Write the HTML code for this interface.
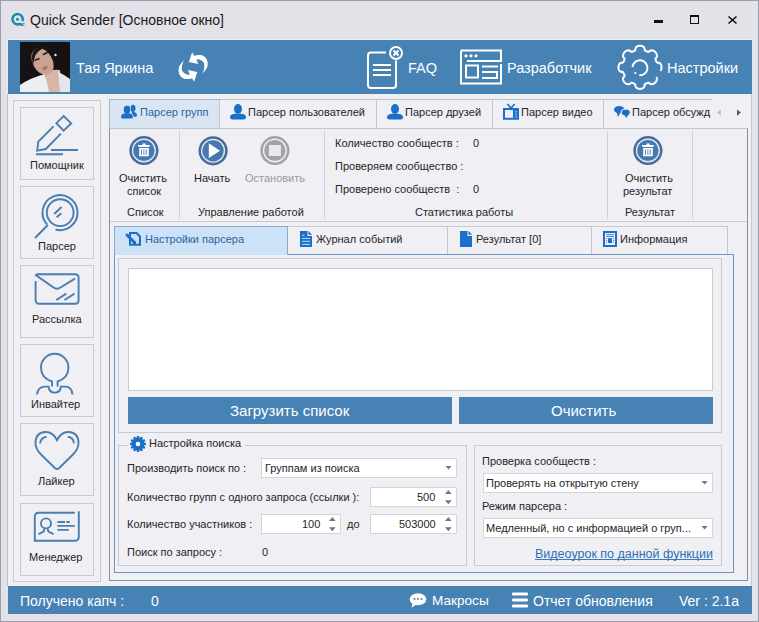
<!DOCTYPE html>
<html><head><meta charset="utf-8">
<style>
*{box-sizing:border-box;margin:0;padding:0}
html,body{width:759px;height:622px;overflow:hidden;background:#e3e2e8}
body{position:relative;font-family:"Liberation Sans",sans-serif;color:#262626}
.a{position:absolute}
.t{position:absolute;white-space:nowrap;line-height:1;font-size:11px}
.w{color:#fff}
.bx{position:absolute;border:1px solid #c9c9d1}
svg{position:absolute;overflow:visible}
</style></head><body>
<!-- window border -->
<div class="a" style="left:0;top:0;width:759px;height:622px;border:1px solid #9d9db1"></div>

<!-- title bar -->
<svg style="left:0;top:0" width="40" height="40" viewBox="0 0 40 40">
  <path d="M22.37 21.13 A5.15 5.15 0 1 0 19.19 24.10" fill="none" stroke="#1a8ba5" stroke-width="2.5"/>
  <path d="M18.8 23.6 L22.6 25.2" stroke="#1a8ba5" stroke-width="2.4"/>
  <path d="M22.5 23.4 H24.5 M22.5 25.3 H24.5" stroke="#2a7f95" stroke-width="0.9"/>
  <circle cx="17.5" cy="19.2" r="1.5" fill="#1a8ba5"/>
</svg>
<div class="t" style="left:30px;top:13px;font-size:14px;color:#1a1a1a">Quick Sender [Основное окно]</div>
<div class="a" style="left:654px;top:20px;width:9px;height:3px;background:#111"></div>
<div class="a" style="left:690px;top:15px;width:9px;height:9px;border:1px solid #111;border-top-width:2px"></div>
<svg style="left:728px;top:16px" width="9" height="8" viewBox="0 0 9 8"><path d="M0.5 0.5 L8.5 7.5 M8.5 0.5 L0.5 7.5" stroke="#111" stroke-width="1.6"/></svg>

<!-- header -->
<div class="a" style="left:7px;top:39px;width:745px;height:56px;background:#eaedf3"></div>
<div class="a" style="left:8px;top:40px;width:744px;height:54px;background:#4682b4"></div>
<div id="photo" class="a" style="left:20px;top:42px;width:50px;height:50px;background:#2a1e1e;overflow:hidden"></div>
<div class="t w" style="left:76px;top:61px;font-size:14.5px">Тая Яркина</div>
<div class="t w" style="left:408px;top:61px;font-size:14.5px">FAQ</div>
<div class="t w" style="left:507px;top:61px;font-size:14.5px">Разработчик</div>
<div class="t w" style="left:667px;top:61px;font-size:14.5px">Настройки</div>

<!-- main frame -->
<div class="a" style="left:7px;top:94px;width:745px;height:492px;background:#efeff4;border-left:1px solid #bdbdc6;border-right:1px solid #c8c8cf"></div>
<div class="a" style="left:8px;top:94px;width:743px;height:1px;background:#e8f0f8"></div>

<!-- sidebar -->
<div class="bx" style="left:13px;top:100px;width:88px;height:482px"></div>
<div class="bx" style="left:20px;top:107px;width:74px;height:73px"></div>
<div class="bx" style="left:20px;top:186px;width:74px;height:73px"></div>
<div class="bx" style="left:20px;top:265px;width:74px;height:73px"></div>
<div class="bx" style="left:20px;top:344px;width:74px;height:73px"></div>
<div class="bx" style="left:20px;top:423px;width:74px;height:73px"></div>
<div class="bx" style="left:20px;top:503px;width:74px;height:73px"></div>
<div class="t" style="left:30px;top:160px">Помощник</div>
<div class="t" style="left:38px;top:241px">Парсер</div>
<div class="t" style="left:32px;top:314px">Рассылка</div>
<div class="t" style="left:31px;top:399px">Инвайтер</div>
<div class="t" style="left:38px;top:476px">Лайкер</div>
<div class="t" style="left:29px;top:552px">Менеджер</div>

<!-- tab control 1 -->
<div class="a" style="left:109px;top:99px;width:603px;height:30px;border-top:1px solid #b9bfcc"></div>
<div class="a" style="left:109px;top:99px;width:111px;height:29px;background:#d9e5f2;border:1px solid #a7b4c6;border-bottom:none"></div>
<div class="a" style="left:219px;top:100px;width:1px;height:28px;background:#c3c7d0"></div>
<div class="a" style="left:376px;top:100px;width:1px;height:28px;background:#c3c7d0"></div>
<div class="a" style="left:492px;top:100px;width:1px;height:28px;background:#c3c7d0"></div>
<div class="a" style="left:603px;top:100px;width:1px;height:28px;background:#c3c7d0"></div>
<div class="t" style="left:140px;top:107px;color:#2667a3">Парсер групп</div>
<div class="t" style="left:248px;top:107px">Парсер пользователей</div>
<div class="t" style="left:405px;top:107px">Парсер друзей</div>
<div class="t" style="left:521px;top:107px">Парсер видео</div>
<div class="t" style="left:632px;top:107px">Парсер обсужд</div>

<!-- page 1 -->
<div class="a" style="left:109px;top:128px;width:639px;height:453px;border:1px solid #7d93b0;border-top-color:#c0c6d0"></div>
<div class="a" style="left:110px;top:221px;width:637px;height:1px;background:#c9c9d1"></div>
<div class="a" style="left:179px;top:131px;width:1px;height:88px;background:#d0d0d8"></div>
<div class="a" style="left:324px;top:131px;width:1px;height:88px;background:#d0d0d8"></div>
<div class="a" style="left:607px;top:131px;width:1px;height:88px;background:#d0d0d8"></div>
<div class="a" style="left:692px;top:131px;width:1px;height:88px;background:#d0d0d8"></div>

<div class="t" style="left:119px;top:173px">Очистить</div>
<div class="t" style="left:127px;top:186px">список</div>
<div class="t" style="left:127px;top:207px">Список</div>
<div class="t" style="left:194px;top:173px">Начать</div>
<div class="t" style="left:245px;top:173px;color:#9a9a9a">Остановить</div>
<div class="t" style="left:198px;top:207px">Управление работой</div>
<div class="t" style="left:335px;top:138px">Количество сообществ :</div>
<div class="t" style="left:473px;top:138px">0</div>
<div class="t" style="left:335px;top:161px">Проверяем сообщество :</div>
<div class="t" style="left:335px;top:184px">Проверено сообществ&nbsp; :</div>
<div class="t" style="left:473px;top:184px">0</div>
<div class="t" style="left:415px;top:207px">Статистика работы</div>
<div class="t" style="left:625px;top:173px">Очистить</div>
<div class="t" style="left:623px;top:186px">результат</div>
<div class="t" style="left:625px;top:207px">Результат</div>

<!-- tab control 2 -->
<div class="a" style="left:114px;top:226px;width:614px;height:29px;border-top:1px solid #c4c8d0"></div>
<div class="a" style="left:114px;top:226px;width:174px;height:29px;background:#cde1f7;border:1px solid #85a9d2;border-bottom:none"></div>
<div class="a" style="left:447px;top:227px;width:1px;height:27px;background:#c3c7d0"></div>
<div class="a" style="left:591px;top:227px;width:1px;height:27px;background:#c3c7d0"></div>
<div class="a" style="left:727px;top:227px;width:1px;height:27px;background:#c3c7d0"></div>
<div class="t" style="left:145px;top:234px;color:#2667a3">Настройки парсера</div>
<div class="t" style="left:316px;top:234px">Журнал событий</div>
<div class="t" style="left:476px;top:234px">Результат [0]</div>
<div class="t" style="left:620px;top:234px">Информация</div>

<div class="a" style="left:114px;top:254px;width:620px;height:319px;border:1px solid #6f94c0;border-top:none"></div>
<div class="a" style="left:288px;top:254px;width:446px;height:1px;background:#6f94c0"></div>
<div class="bx" style="left:118px;top:258px;width:604px;height:175px"></div>
<div class="a" style="left:128px;top:268px;width:585px;height:123px;background:#fff;border:1px solid #c9c9d1"></div>
<div class="a" style="left:128px;top:397px;width:324px;height:27px;background:#4682b4"></div>
<div class="a" style="left:459px;top:397px;width:254px;height:27px;background:#4682b4"></div>
<div class="t w" style="left:230px;top:403px;font-size:15px">Загрузить список</div>
<div class="t w" style="left:551px;top:403px;font-size:15px">Очистить</div>

<!-- group left -->
<div class="bx" style="left:118px;top:445px;width:349px;height:121px"></div>
<div class="a" style="left:128px;top:440px;width:117px;height:10px;background:#efeff4"></div>
<div class="t" style="left:149px;top:438px">Настройка поиска</div>
<div class="t" style="left:127px;top:463px">Производить поиск по :</div>
<div class="t" style="left:127px;top:492px">Количество групп с одного запроса (ссылки ):</div>
<div class="t" style="left:127px;top:519px">Количество участников :</div>
<div class="t" style="left:347px;top:519px">до</div>
<div class="t" style="left:127px;top:547px">Поиск по запросу :</div>
<div class="t" style="left:262px;top:547px">0</div>
<div class="a" style="left:261px;top:458px;width:196px;height:20px;background:#fff;border:1px solid #d4d4dc"></div>
<div class="t" style="left:265px;top:463px">Группам из поиска</div>
<div class="a" style="left:370px;top:487px;width:87px;height:20px;background:#fff;border:1px solid #d4d4dc"></div>
<div class="t" style="left:417px;top:492px">500</div>
<div class="a" style="left:261px;top:514px;width:80px;height:20px;background:#fff;border:1px solid #d4d4dc"></div>
<div class="t" style="left:302px;top:519px">100</div>
<div class="a" style="left:370px;top:514px;width:87px;height:20px;background:#fff;border:1px solid #d4d4dc"></div>
<div class="t" style="left:399px;top:519px">503000</div>

<!-- group right -->
<div class="bx" style="left:474px;top:445px;width:248px;height:121px"></div>
<div class="t" style="left:482px;top:456px">Проверка сообществ :</div>
<div class="a" style="left:483px;top:473px;width:230px;height:20px;background:#fff;border:1px solid #d4d4dc"></div>
<div class="t" style="left:486px;top:478px">Проверять на открытую стену</div>
<div class="t" style="left:482px;top:501px">Режим парсера :</div>
<div class="a" style="left:483px;top:518px;width:230px;height:20px;background:#fff;border:1px solid #d4d4dc"></div>
<div class="t" style="left:486px;top:523px">Медленный, но с информацией о груп...</div>
<div class="t" style="left:535px;top:548px;font-size:12.5px;color:#3270ad;text-decoration:underline;text-decoration-color:#2a80d0;text-decoration-skip-ink:none">Видеоурок по данной функции</div>

<!-- status bar -->
<div class="a" style="left:8px;top:586px;width:744px;height:28px;background:#4682b4"></div>
<div class="t w" style="left:20px;top:594px;font-size:14px">Получено капч :</div>
<div class="t w" style="left:151px;top:594px;font-size:14px">0</div>
<div class="t w" style="left:432px;top:594px;font-size:13.6px">Макросы</div>
<div class="t w" style="left:533px;top:594px;font-size:14px">Отчет обновления</div>
<div class="t w" style="left:679px;top:594px;font-size:14px">Ver : 2.1a</div>

<!-- ICONS overlay -->
<svg class="a" style="left:0;top:0" width="759" height="622" viewBox="0 0 759 622">
 <!-- photo -->
 <defs><clipPath id="pc"><rect x="20" y="42" width="50" height="50"/></clipPath></defs>
 <rect x="20" y="42" width="50" height="50" fill="#161112"/>
 <g clip-path="url(#pc)"><g>
  <rect x="20" y="42" width="50" height="50" fill="#161112"/>
  <path d="M46 72 Q53 69 60 70 L63 92 L44 92 Z" fill="#d6b6a6"/>
  <ellipse cx="42.5" cy="61.5" rx="9.8" ry="14.5" transform="rotate(-30 42.5 61.5)" fill="#c9a390"/>
  <path d="M33 51 Q38 46 45 47 Q39 50 35.5 55 Q33.5 60 33 66 Q31 58 33 51 Z" fill="#1e1616"/>
  <path d="M20 92 V85 Q30 78 45 74 L49 92 Z" fill="#eeedf0"/>
  <path d="M58 72 Q65 75 70 79 V92 H60 Z" fill="#e6e4e8"/>
  <path d="M34.5 60.5 L39.5 58.5 M43 54.8 L47.8 52.3" stroke="#2e1e1c" stroke-width="1.6"/>
  <ellipse cx="45" cy="68" rx="3" ry="1.7" transform="rotate(-30 45 68)" fill="#b87068"/>
  <circle cx="55.5" cy="55" r="1.2" fill="#ece6e2"/>
 </g></g>
 <!-- refresh -->
 <g fill="#fff">
  <path id="arr" d="M192.1 52.2 L188.9 62 L198.3 63.9 L196.3 59.4 Q201.3 59 203.9 63 Q205.6 67.5 202.2 73.6 Q208.3 68.5 207.7 63 Q207 56.5 201.2 55.1 Q197.6 54.5 194.2 55.8 Z"/>
  <use href="#arr" transform="rotate(180 193.1 67)"/>
 </g>
 <!-- FAQ icon -->
 <g fill="none" stroke="#fff" stroke-width="2">
  <path d="M386 52.5 H371 Q368 52.5 368 55.5 V85 Q368 88 371 88 H393 Q396 88 396 85 V60.5"/>
  <circle cx="396" cy="53" r="6"/>
  <path d="M373 65 H391 M373 70 H391 M373 75 H391"/>
 </g>
 <path d="M393.5 50.5 L398.5 55.5 M398.5 50.5 L393.5 55.5" stroke="#fff" stroke-width="1.8"/>
 <!-- developer icon -->
 <g fill="none" stroke="#fff" stroke-width="2">
  <path d="M461 50.5 H501 V61 H467 M501 64 V83.5 H461 V50.5"/>
  <rect x="466" y="65.5" width="12" height="12"/>
  <path d="M482 66.5 H498 M482 72 H497 V78 H482"/>
 </g>
 <g fill="#fff"><circle cx="466" cy="55.8" r="1.6"/><circle cx="471" cy="55.8" r="1.6"/><circle cx="476" cy="55.8" r="1.6"/></g>
 <!-- settings gear -->
 <path d="M656.71 77.74 L656.80 77.99 L656.86 78.22 L656.90 78.44 L656.92 78.66 L656.93 78.86 L656.93 79.07 L656.92 79.26 L656.90 79.46 L656.87 79.64 L656.83 79.83 L656.79 80.01 L656.74 80.19 L656.68 80.36 L656.62 80.53 L656.55 80.70 L656.48 80.87 L656.40 81.03 L656.32 81.19 L656.23 81.34 L656.14 81.49 L656.04 81.64 L655.94 81.79 L655.83 81.93 L655.73 82.07 L655.61 82.20 L655.50 82.34 L655.38 82.47 L655.26 82.59 L655.13 82.71 L655.00 82.83 L654.87 82.95 L654.73 83.06 L654.59 83.17 L654.45 83.27 L654.30 83.37 L654.15 83.46 L654.00 83.55 L653.84 83.64 L653.68 83.72 L653.52 83.80 L653.35 83.87 L653.19 83.94 L653.01 84.00 L652.84 84.05 L652.66 84.10 L652.48 84.14 L652.29 84.18 L652.10 84.20 L651.91 84.22 L651.71 84.23 L651.51 84.23 L651.30 84.22 L651.08 84.19 L650.85 84.14 L650.62 84.08 L650.37 83.98 L650.10 83.84 L649.78 83.62 L649.19 82.92 L648.96 82.82 L648.78 82.80 L648.61 82.79 L648.45 82.80 L648.30 82.82 L648.15 82.84 L648.00 82.87 L647.85 82.89 L647.71 82.93 L647.57 82.96 L647.43 83.00 L647.30 83.04 L647.16 83.08 L647.03 83.13 L646.89 83.18 L646.76 83.23 L646.63 83.28 L646.50 83.33 L646.37 83.39 L646.24 83.45 L646.12 83.51 L645.99 83.58 L645.86 83.65 L645.74 83.72 L645.61 83.79 L645.49 83.87 L645.37 83.95 L645.24 84.04 L645.12 84.13 L645.00 84.22 L644.88 84.33 L644.77 84.45 L644.65 84.58 L644.56 84.79 L644.63 85.69 L644.57 86.09 L644.48 86.39 L644.37 86.64 L644.25 86.86 L644.13 87.05 L643.99 87.22 L643.86 87.38 L643.71 87.53 L643.57 87.67 L643.42 87.79 L643.26 87.91 L643.11 88.02 L642.95 88.12 L642.79 88.21 L642.63 88.30 L642.46 88.38 L642.30 88.45 L642.13 88.52 L641.96 88.58 L641.79 88.63 L641.62 88.68 L641.45 88.73 L641.28 88.77 L641.10 88.80 L640.93 88.83 L640.75 88.85 L640.58 88.87 L640.40 88.89 L640.23 88.90 L640.05 88.90 L639.87 88.90 L639.70 88.89 L639.52 88.88 L639.35 88.87 L639.17 88.84 L639.00 88.82 L638.82 88.79 L638.65 88.75 L638.48 88.71 L638.31 88.66 L638.14 88.61 L637.97 88.55 L637.80 88.49 L637.63 88.42 L637.47 88.34 L637.30 88.26 L637.14 88.17 L636.98 88.08 L636.82 87.97 L636.67 87.86 L636.52 87.74 L636.37 87.61 L636.23 87.47 L636.08 87.32 L635.95 87.15 L635.82 86.97 L635.70 86.77 L635.58 86.54 L635.48 86.27 L635.40 85.93 L635.37 85.43 L635.41 84.69 L635.30 84.52 L635.18 84.39 L635.07 84.28 L634.95 84.18 L634.82 84.09 L634.70 84.00 L634.58 83.92 L634.46 83.84 L634.33 83.76 L634.21 83.69 L634.08 83.62 L633.96 83.55 L633.83 83.49 L633.70 83.43 L633.57 83.37 L633.44 83.31 L633.31 83.26 L633.18 83.20 L633.05 83.16 L632.92 83.11 L632.78 83.06 L632.65 83.02 L632.51 82.98 L632.37 82.95 L632.23 82.91 L632.08 82.88 L631.94 82.85 L631.79 82.83 L631.64 82.81 L631.48 82.80 L631.32 82.79 L631.15 82.80 L630.95 82.84 L630.46 83.40 L630.08 83.73 L629.78 83.91 L629.52 84.03 L629.28 84.11 L629.05 84.16 L628.83 84.20 L628.61 84.22 L628.41 84.23 L628.21 84.23 L628.01 84.21 L627.82 84.19 L627.63 84.16 L627.44 84.12 L627.26 84.08 L627.09 84.03 L626.91 83.97 L626.74 83.91 L626.57 83.84 L626.41 83.77 L626.25 83.69 L626.09 83.60 L625.94 83.52 L625.79 83.42 L625.64 83.33 L625.49 83.22 L625.35 83.12 L625.21 83.01 L625.08 82.90 L624.94 82.78 L624.82 82.66 L624.69 82.54 L624.57 82.41 L624.45 82.28 L624.34 82.15 L624.23 82.01 L624.12 81.87 L624.02 81.72 L623.92 81.58 L623.82 81.43 L623.73 81.27 L623.65 81.12 L623.57 80.96 L623.49 80.80 L623.42 80.63 L623.36 80.46 L623.30 80.29 L623.24 80.11 L623.19 79.93 L623.15 79.75 L623.12 79.56 L623.09 79.37 L623.08 79.18 L623.07 78.98 L623.07 78.78 L623.09 78.57 L623.12 78.35 L623.17 78.12 L623.24 77.88 L623.34 77.63 L623.48 77.36 L623.73 77.03 L624.41 76.45 L624.49 76.23 L624.51 76.05 L624.51 75.89 L624.50 75.73 L624.48 75.58 L624.46 75.43 L624.43 75.28 L624.40 75.13 L624.37 74.99 L624.33 74.85 L624.29 74.71 L624.25 74.58 L624.21 74.44 L624.16 74.31 L624.12 74.17 L624.07 74.04 L624.01 73.91 L623.96 73.78 L623.90 73.65 L623.84 73.52 L623.78 73.40 L623.71 73.27 L623.64 73.15 L623.57 73.02 L623.50 72.90 L623.42 72.77 L623.34 72.65 L623.25 72.53 L623.16 72.41 L623.06 72.29 L622.96 72.17 L622.84 72.05 L622.69 71.94 L622.45 71.85 L621.55 71.92 L621.16 71.86 L620.87 71.76 L620.63 71.65 L620.42 71.53 L620.22 71.41 L620.05 71.27 L619.89 71.14 L619.75 70.99 L619.61 70.85 L619.49 70.70 L619.38 70.54 L619.27 70.39 L619.17 70.23 L619.08 70.07 L618.99 69.90 L618.91 69.74 L618.84 69.57 L618.77 69.41 L618.71 69.24 L618.66 69.07 L618.61 68.90 L618.57 68.72 L618.53 68.55 L618.49 68.38 L618.47 68.20 L618.44 68.03 L618.42 67.85 L618.41 67.68 L618.40 67.50 L618.40 67.33 L618.40 67.15 L618.41 66.97 L618.42 66.80 L618.44 66.62 L618.46 66.45 L618.49 66.27 L618.52 66.10 L618.55 65.93 L618.60 65.75 L618.64 65.58 L618.70 65.41 L618.76 65.24 L618.82 65.07 L618.89 64.91 L618.97 64.74 L619.05 64.58 L619.14 64.42 L619.24 64.26 L619.34 64.10 L619.46 63.95 L619.58 63.80 L619.71 63.65 L619.85 63.50 L620.01 63.37 L620.17 63.23 L620.36 63.10 L620.56 62.98 L620.80 62.87 L621.07 62.77 L621.42 62.69 L621.99 62.67 L622.64 62.69 L622.80 62.58 L622.92 62.47 L623.03 62.35 L623.13 62.23 L623.23 62.11 L623.31 61.99 L623.40 61.86 L623.47 61.74 L623.55 61.61 L623.62 61.49 L623.69 61.36 L623.76 61.24 L623.82 61.11 L623.88 60.98 L623.94 60.86 L624.00 60.73 L624.05 60.60 L624.10 60.46 L624.15 60.33 L624.20 60.20 L624.24 60.06 L624.28 59.93 L624.32 59.79 L624.36 59.65 L624.39 59.51 L624.42 59.36 L624.45 59.22 L624.47 59.07 L624.49 58.91 L624.50 58.76 L624.51 58.59 L624.50 58.42 L624.45 58.22 L623.83 57.69 L623.54 57.33 L623.37 57.04 L623.26 56.79 L623.18 56.54 L623.13 56.32 L623.09 56.10 L623.08 55.88 L623.07 55.68 L623.07 55.48 L623.09 55.28 L623.11 55.09 L623.14 54.90 L623.18 54.72 L623.23 54.54 L623.28 54.36 L623.34 54.19 L623.40 54.02 L623.47 53.85 L623.55 53.69 L623.62 53.53 L623.71 53.37 L623.80 53.22 L623.89 53.06 L623.99 52.92 L624.09 52.77 L624.20 52.63 L624.31 52.49 L624.42 52.36 L624.54 52.23 L624.66 52.10 L624.78 51.97 L624.91 51.85 L625.04 51.73 L625.17 51.62 L625.31 51.51 L625.45 51.40 L625.60 51.30 L625.74 51.20 L625.89 51.11 L626.05 51.02 L626.20 50.94 L626.36 50.86 L626.53 50.78 L626.69 50.71 L626.86 50.65 L627.04 50.59 L627.21 50.53 L627.39 50.49 L627.58 50.45 L627.76 50.42 L627.95 50.39 L628.15 50.37 L628.35 50.37 L628.55 50.37 L628.77 50.39 L628.98 50.42 L629.21 50.47 L629.45 50.55 L629.71 50.65 L629.99 50.81 L630.33 51.08 L630.89 51.73 L631.09 51.79 L631.27 51.81 L631.43 51.81 L631.59 51.79 L631.75 51.78 L631.90 51.75 L632.04 51.73 L632.19 51.70 L632.33 51.66 L632.47 51.63 L632.61 51.59 L632.74 51.55 L632.88 51.50 L633.01 51.46 L633.15 51.41 L633.28 51.36 L633.41 51.31 L633.54 51.25 L633.67 51.19 L633.79 51.13 L633.92 51.07 L634.05 51.00 L634.17 50.93 L634.30 50.86 L634.42 50.79 L634.54 50.71 L634.67 50.62 L634.79 50.54 L634.91 50.45 L635.03 50.35 L635.15 50.24 L635.27 50.12 L635.38 49.97 L635.40 49.45 L635.38 48.78 L635.46 48.42 L635.55 48.14 L635.66 47.90 L635.78 47.69 L635.91 47.50 L636.05 47.33 L636.18 47.17 L636.33 47.03 L636.48 46.90 L636.63 46.77 L636.78 46.66 L636.94 46.55 L637.10 46.46 L637.26 46.36 L637.42 46.28 L637.58 46.20 L637.75 46.13 L637.92 46.07 L638.09 46.01 L638.26 45.95 L638.43 45.90 L638.60 45.86 L638.77 45.82 L638.95 45.79 L639.12 45.76 L639.30 45.74 L639.47 45.72 L639.65 45.71 L639.82 45.70 L640.00 45.70 L640.18 45.70 L640.35 45.71 L640.53 45.72 L640.70 45.74 L640.88 45.76 L641.05 45.79 L641.23 45.82 L641.40 45.86 L641.57 45.90 L641.74 45.95 L641.91 46.01 L642.08 46.07 L642.25 46.13 L642.42 46.20 L642.58 46.28 L642.74 46.36 L642.90 46.46 L643.06 46.55 L643.22 46.66 L643.37 46.77 L643.52 46.90 L643.67 47.03 L643.82 47.17 L643.95 47.33 L644.09 47.50 L644.22 47.69 L644.34 47.90 L644.45 48.14 L644.54 48.42 L644.62 48.78 L644.60 49.45 L644.62 49.97 L644.73 50.12 L644.85 50.24 L644.97 50.35 L645.09 50.45 L645.21 50.54 L645.33 50.62 L645.46 50.71 L645.58 50.79 L645.70 50.86 L645.83 50.93 L645.95 51.00 L646.08 51.07 L646.21 51.13 L646.33 51.19 L646.46 51.25 L646.59 51.31 L646.72 51.36 L646.85 51.41 L646.99 51.46 L647.12 51.50 L647.26 51.55 L647.39 51.59 L647.53 51.63 L647.67 51.66 L647.81 51.70 L647.96 51.73 L648.10 51.75 L648.25 51.78 L648.41 51.79 L648.57 51.81 L648.73 51.81 L648.91 51.79 L649.11 51.73 L649.67 51.08 L650.01 50.81 L650.29 50.65 L650.55 50.55 L650.79 50.47 L651.02 50.42 L651.23 50.39 L651.45 50.37 L651.65 50.37 L651.85 50.37 L652.05 50.39 L652.24 50.42 L652.42 50.45 L652.61 50.49 L652.79 50.53 L652.96 50.59 L653.14 50.65 L653.31 50.71 L653.47 50.78 L653.64 50.86 L653.80 50.94 L653.95 51.02 L654.11 51.11 L654.26 51.20 L654.40 51.30 L654.55 51.40 L654.69 51.51 L654.83 51.62 L654.96 51.73 L655.09 51.85 L655.22 51.97 L655.34 52.10 L655.46 52.23 L655.58 52.36 L655.69 52.49 L655.80 52.63 L655.91 52.77 L656.01 52.92 L656.11 53.06 L656.20 53.22 L656.29 53.37 L656.38 53.53 L656.45 53.69 L656.53 53.85 L656.60 54.02 L656.66 54.19 L656.72 54.36 L656.77 54.54 L656.82 54.72 L656.86 54.90 L656.89 55.09 L656.91 55.28 L656.93 55.48 L656.93 55.68 L656.92 55.88 L656.91 56.10 L656.87 56.32 L656.82 56.54 L656.74 56.79 L656.63 57.04 L656.46 57.33 L656.17 57.69 L655.55 58.22 L655.50 58.42 L655.49 58.59 L655.50 58.76 L655.51 58.91 L655.53 59.07 L655.55 59.22 L655.58 59.36 L655.61 59.51 L655.64 59.65 L655.68 59.79 L655.72 59.93 L655.76 60.06 L655.80 60.20 L655.85 60.33 L655.90 60.46 L655.95 60.60 L656.00 60.73 L656.06 60.86 L656.12 60.98 L656.18 61.11 L656.24 61.24 L656.31 61.36 L656.38 61.49 L656.45 61.61 L656.53 61.74 L656.60 61.86 L656.69 61.99 L656.77 62.11 L656.87 62.23 L656.97 62.35 L657.08 62.47 L657.20 62.58 L657.36 62.69 L658.01 62.67 L658.58 62.69 L658.93 62.77 L659.20 62.87 L659.44 62.98 L659.64 63.10 L659.83 63.23 L659.99 63.37 L660.15 63.50 L660.29 63.65 L660.42 63.80 L660.54 63.95 L660.66 64.10 L660.76 64.26 L660.86 64.42 L660.95 64.58 L661.03 64.74 L661.11 64.91 L661.18 65.07 L661.24 65.24 L661.30 65.41 L661.36 65.58 L661.40 65.75 L661.45 65.93 L661.48 66.10 L661.51 66.27 L661.54 66.45 L661.56 66.62 L661.58 66.80 L661.59 66.97 L661.60 67.15 L661.60 67.33 L661.60 67.50 L661.59 67.68 L661.58 67.85 L661.56 68.03 L661.53 68.20 L661.51 68.38 L661.47 68.55 L661.43 68.72 L661.39 68.90 L661.34 69.07 L661.29 69.24 L661.23 69.41 L661.16 69.57 L661.09 69.74 L661.01 69.90 L660.92 70.07 L660.83 70.23" fill="none" stroke="#fff" stroke-width="2" stroke-linecap="round"/>
 <path d="M632.5 67.1 A7.5 7.5 0 1 1 639.3 75.3" fill="none" stroke="#fff" stroke-width="2"/>
 <circle cx="635.3" cy="73" r="1.1" fill="#fff"/>
 <!-- sidebar icons -->
 <g fill="none" stroke="#4a7eb2" stroke-width="1.9">
  <!-- pen -->
  <path d="M63.6 116 L71.2 123.4 L63.6 130.6 L56.4 123.2 Z"/>
  <path d="M53.5 126.3 L38.3 141.6 L37.2 150.6 L45.8 149 L60.9 133.6"/>
  <path d="M51 150 H78 M36 154.3 H63" stroke-width="2"/>
  <!-- magnifier -->
  <circle cx="60.2" cy="212.6" r="13.4"/>
  <path d="M47.3 224.6 A17.5 17.5 0 1 1 55.5 229.5"/>
  <path d="M47.8 225 L35 238" stroke-width="2"/>
  <path d="M54.2 214 L61.6 207 M56.6 217.2 L61.4 213.3"/>
  <!-- envelope -->
  <path d="M35.6 281 V300 Q35.6 303.8 39.3 303.8 H75 Q78.6 303.8 78.6 300 V277.8 Q78.6 274.2 75 274.2 H38 Q36 274.2 35.8 275 L53.5 287.5 Q57 290 60.5 287.5 L75 278.6"/>
  <path d="M56.3 300 L66.3 293.6 M64.5 300 L74.5 293.6"/>
  <!-- person -->
  <path d="M52 386.5 V381.5 Q41 378 41 367.5 A13.7 13.7 0 0 1 68.4 367.5 Q68.4 378 57.6 381.5 V386.5"/>
  <path d="M37 394.5 Q38 386.6 45 386.6 H48.5 C49 391.5 51.5 392.6 54.7 392.6 C58 392.6 60.5 391.5 60.9 386.6 H65 Q72 386.6 72.4 394.5"/>
  <!-- heart -->
  <path d="M57 440.2 Q53 431.8 45.5 432 Q35.5 432.5 35.5 443 Q35.5 449 41 454.5 L54.8 468 Q57 470 59.2 468 L73 454.5 Q78.5 449 78.5 443 Q78.5 432.5 68.5 432 Q61 431.8 57 440.2 Z"/>
  <path d="M40 443.4 Q41 437.5 46.6 436.8 M67.8 436.8 Q73.4 437.5 74 443.4"/>
  <!-- id card -->
  <path d="M74.8 512.8 H39 Q34.8 512.8 34.8 517 V540.8 H74.5 Q78.8 540.8 78.8 536.5 V511.3" stroke-width="1.9"/>
  <circle cx="46" cy="523.4" r="5"/>
  <path d="M38.5 534.2 L43.6 531.5 Q44.5 530 44 528.5 M53.5 534.2 L48.4 531.5 Q47.5 530 48 528.5"/>
  <path d="M57.4 522 H65 M66.3 522 H69.8 M57.4 525.9 H74.8 M57.4 529.8 H68.8" stroke-width="1.8"/>
 </g>
 <!-- tab icons -->
 <g fill="#1a6fca">
  <ellipse cx="133" cy="108.3" rx="2.5" ry="3.6"/>
  <path d="M132 111.8 Q136.8 112 137 115.2 Q137 116.8 135.3 116.8 L132 116.8 Z"/>
  <ellipse cx="127" cy="109.8" rx="3.4" ry="4.2" stroke="#d9e5f2" stroke-width="0.9"/>
  <path d="M120.6 117 Q120.8 113.2 125.3 112.8 L128.7 112.8 Q133.2 113.2 133.4 117 Q133.4 119 131.4 119 H122.6 Q120.6 119 120.6 117 Z" stroke="#d9e5f2" stroke-width="0.9"/>
  <ellipse cx="127" cy="109.8" rx="3.2" ry="4"/>
  <ellipse cx="238" cy="109" rx="4" ry="5"/>
  <path d="M230 117.3 Q230 114.2 235.5 113.8 H240.5 Q246 114.2 246 117.3 Q246 119.6 243.5 119.6 H232.5 Q230 119.6 230 117.3 Z"/>
  <ellipse cx="395" cy="109" rx="4" ry="5"/>
  <path d="M387 117.3 Q387 114.2 392.5 113.8 H397.5 Q403 114.2 403 117.3 Q403 119.6 400.5 119.6 H389.5 Q387 119.6 387 117.3 Z"/>
  <path d="M503 108 H519 V119.7 H503 Z M505 110 V117.8 H513 V110 Z" fill-rule="evenodd"/>
  <circle cx="516" cy="111.7" r="0.9" fill="#8cc0ee"/><circle cx="516" cy="114.4" r="0.9" fill="#8cc0ee"/><circle cx="516" cy="117.1" r="0.9" fill="#8cc0ee"/>
  <path d="M507.3 104 L511 108 L514.7 104" fill="none" stroke="#1a6fca" stroke-width="1.6"/>
  <ellipse cx="619.2" cy="109.6" rx="5.2" ry="3.6"/>
  <path d="M616.5 111 L618 117 L621 111.5 Z"/>
  <ellipse cx="625.8" cy="112.6" rx="4.6" ry="3.6" stroke="#eeeef4" stroke-width="1.2"/>
  <path d="M624 114.5 L626.5 118 L628 114.5 Z"/>
 </g>
 <path d="M717 112.5 L720.8 109.3 V115.7 Z" fill="#c2bcc8"/>
 <path d="M740.8 112.6 L737 109.5 V115.7 Z" fill="#555"/>
 <!-- ribbon icons -->
 <g id="ri">
  <circle cx="143.9" cy="150.5" r="13.3" fill="none" stroke="#4b6b9a" stroke-width="2.6"/>
  <circle cx="143.9" cy="150.5" r="11.3" fill="#d3e4f5"/>
  <circle cx="143.9" cy="150.5" r="10.6" fill="#4677ae"/>
  <path d="M138.2 145 H149.7 V146.9 H138.2 Z M142.5 143.6 H145.6 V145 H142.5 Z M139.2 147.9 H148.8 V156.3 H139.2 Z" fill="#fff"/>
  <path d="M141.5 149.5 V154.8 M143.9 149.5 V154.8 M146.3 149.5 V154.8" stroke="#4677ae" stroke-width="0.9"/>
 </g>
 <circle cx="213.1" cy="150.8" r="13.3" fill="none" stroke="#4b6b9a" stroke-width="2.6"/>
 <circle cx="213.1" cy="150.8" r="11.3" fill="#d3e4f5"/>
 <circle cx="213.1" cy="150.8" r="10.6" fill="#4677ae"/>
 <path d="M208.8 143.2 L220 150.7 L208.8 158 Z" fill="#fff"/>
 <circle cx="274.9" cy="150.5" r="13.3" fill="none" stroke="#a3a3a6" stroke-width="2.6"/>
 <circle cx="274.9" cy="150.5" r="10.6" fill="#a3a3a6"/>
 <rect x="268.9" y="145" width="12" height="11" fill="#e9e9ec"/>
 <use href="#ri" transform="translate(504 0)"/>
 <!-- subtab icons -->
 <g fill="#1a6fca">
  <path d="M129 232 H137 L141 236 V245.8 H129 Z M131 234 V243.8 H139 V237 L136 234 Z" fill-rule="evenodd"/>
  <path d="M300 231 H307.5 V236 H312 V247 H300 Z"/>
  <path d="M308.5 231 L312 234.8 H308.5 Z"/>
  <path d="M460 231 H467.5 V236 H472 V247 H460 Z"/>
  <path d="M468.5 231 L472 234.8 H468.5 Z"/>
  <path d="M603 231 H617 V247 H603 Z M605 233 V245 H615 V233 Z" fill-rule="evenodd"/>
  <rect x="608" y="238.2" width="4" height="4.8"/>
  <path d="M606.3 234.6 H614 M606.3 236.5 H614" stroke="#1a6fca" stroke-width="0.8"/>
  <circle cx="606.5" cy="238.5" r="0.5"/><circle cx="606.5" cy="240.4" r="0.5"/><circle cx="606.5" cy="242.3" r="0.5"/>
  <circle cx="613.5" cy="238.5" r="0.5"/><circle cx="613.5" cy="240.4" r="0.5"/><circle cx="613.5" cy="242.3" r="0.5"/>
 </g>
 <path d="M127 235 L134.5 242.5" stroke="#1a6fca" stroke-width="3" stroke-linecap="round"/>
 <path d="M134.5 242.5 L135.5 243.5" stroke="#1a4f8a" stroke-width="2"/>
 <path d="M302 235.3 H304.5 M302 238.4 H310 M302 241.3 H310 M302 244.4 H310" stroke="#b8e0f8" stroke-width="1"/>
 <!-- group gear -->
 <g transform="translate(138 444)">
  <circle r="6.4" fill="#1a6fca"/>
  <g fill="#1a6fca"><rect x="-1.2" y="-8" width="2.4" height="16" transform="rotate(0)"/><rect x="-1.2" y="-8" width="2.4" height="16" transform="rotate(30)"/><rect x="-1.2" y="-8" width="2.4" height="16" transform="rotate(60)"/><rect x="-1.2" y="-8" width="2.4" height="16" transform="rotate(90)"/><rect x="-1.2" y="-8" width="2.4" height="16" transform="rotate(120)"/><rect x="-1.2" y="-8" width="2.4" height="16" transform="rotate(150)"/></g>
  <circle r="2.3" fill="#fff"/>
 </g>
 <!-- combo arrows -->
 <g fill="#777">
  <path d="M445.5 466 H451.7 L448.6 469.6 Z"/>
  <path d="M445 494 H451.7 L448.3 490 Z M445 500.2 H451.7 L448.3 504.2 Z"/>
  <path d="M329 521 H335.7 L332.3 517 Z M329 527.2 H335.7 L332.3 531.2 Z"/>
  <path d="M445 521 H451.7 L448.3 517 Z M445 527.2 H451.7 L448.3 531.2 Z"/>
  <path d="M701.5 481 H707.7 L704.6 484.6 Z"/>
  <path d="M701.5 526 H707.7 L704.6 529.6 Z"/>
 </g>
 <!-- status icons -->
 <g fill="#fff">
  <ellipse cx="418" cy="599.3" rx="8.3" ry="6"/>
  <path d="M412.5 603 L411.5 607.8 L417 604 Z"/>
  <rect x="512" y="592.5" width="16" height="3" rx="1.2"/>
  <rect x="512" y="598.5" width="16" height="3" rx="1.2"/>
  <rect x="512" y="604.5" width="16" height="3" rx="1.2"/>
 </g>
 <g fill="#4682b4"><circle cx="414.5" cy="599" r="1"/><circle cx="418" cy="599" r="1"/><circle cx="421.5" cy="599" r="1"/></g>
</svg>
</body></html>
